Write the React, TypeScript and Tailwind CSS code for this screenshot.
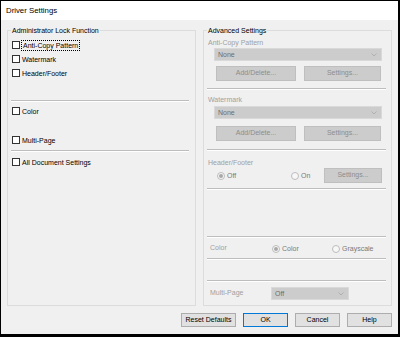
import React from 'react'

function CheckRow({ label, focused = false }: { label: string; focused?: boolean }) {
    return (
        <div className="h-[14px] flex items-center">
            <span className="w-[8px] h-[8px] border border-[#333333] bg-white shrink-0"></span>
            <span
                className={
                    focused
                        ? 'ml-px px-px leading-[9px] border border-dotted border-black'
                        : 'ml-[2px] leading-[9px]'
                }
            >
                {label}
            </span>
        </div>
    )
}

function Radio({ label, checked }: { label: string; checked: boolean }) {
    return (
        <div className="flex items-center">
            <span className="w-[8px] h-[8px] rounded-full border border-[#bcbcbc] bg-[#f7f7f7] flex items-center justify-center shrink-0">
                {checked && <span className="w-[4px] h-[4px] rounded-full bg-[#a8a8a8]"></span>}
            </span>
            <span className="ml-[2px] text-[#7a7a7a] leading-[9px]">{label}</span>
        </div>
    )
}

function Chevron() {
    return (
        <svg width="6" height="4" viewBox="0 0 6 4" className="shrink-0">
            <path d="M0.5 0.5 L3 3 L5.5 0.5" fill="none" stroke="#a8a8a8" strokeWidth="0.8" />
        </svg>
    )
}

function Dropdown({ value, className = '' }: { value: string; className?: string }) {
    return (
        <div
            className={`h-[13px] bg-[#cccccc] border border-[#d9d9d9] flex items-center justify-between pl-[3px] pr-[4px] text-[#6d6d6d] ${className}`}
        >
            <span className="leading-[9px]">{value}</span>
            <Chevron />
        </div>
    )
}

function DisabledButton({ label, className = '' }: { label: string; className?: string }) {
    return (
        <div
            className={`h-[15px] bg-[#cccccc] border border-[#bfbfbf] flex items-center justify-center text-[#8d8d8d] ${className}`}
        >
            {label}
        </div>
    )
}

function Separator({ className = '' }: { className?: string }) {
    return <div className={`h-[2px] border-t border-[#bdbdbd] border-b border-b-white ${className}`}></div>
}

function DialogButton({ label, primary = false, className = '' }: { label: string; primary?: boolean; className?: string }) {
    return (
        <div
            className={`h-[14px] bg-[#e1e1e1] border flex items-center justify-center ${
                primary ? 'border-[#0078d7]' : 'border-[#adadad]'
            } ${className}`}
        >
            {label}
        </div>
    )
}

export default function App() {
    return (
        <div className="w-[400px] h-[337px] bg-black pt-px pl-px pr-[2px] pb-[3px] flex flex-col font-['Liberation_Sans',Arial,sans-serif] text-[7px] text-black">
            {/* Title bar */}
            <div className="h-[19px] bg-white flex items-center pl-[5px] text-[7.8px]">Driver Settings</div>

            <div className="flex-1 bg-[#f0f0f0] flex flex-col px-[6px] pt-[6px] pb-[7px]">
                <div className="flex-1 flex gap-[7px]">
                    {/* Administrator Lock Function */}
                    <fieldset className="flex-1 border border-[#dcdcdc] px-[4px]">
                        <legend className="leading-[9px] px-px -ml-px">Administrator Lock Function</legend>
                        <div className="flex flex-col pt-[3px]">
                            <CheckRow label="Anti-Copy Pattern" focused />
                            <CheckRow label="Watermark" />
                            <CheckRow label="Header/Footer" />
                            <Separator className="mt-[20px] -ml-px mr-[2px]" />
                            <div className="mt-[2px]">
                                <CheckRow label="Color" />
                            </div>
                            <div className="mt-[15px]">
                                <CheckRow label="Multi-Page" />
                            </div>
                            <Separator className="mt-[3px] -ml-px mr-[2px]" />
                            <div className="mt-[3px]">
                                <CheckRow label="All Document Settings" />
                            </div>
                        </div>
                    </fieldset>

                    {/* Advanced Settings */}
                    <fieldset className="flex-1 border border-[#dcdcdc] px-[4px]">
                        <legend className="leading-[9px] px-px -ml-px">Advanced Settings</legend>
                        <div className="flex flex-col">
                            <div className="mt-[3px] h-[9px] leading-[9px] text-[#a0a0a0]">Anti-Copy Pattern</div>
                            <Dropdown value="None" className="mt-px ml-[6px] mr-[5px]" />
                            <div className="mt-[5px] flex">
                                <DisabledButton label="Add/Delete..." className="ml-[8px] w-[80px]" />
                                <DisabledButton label="Settings..." className="ml-[8px] w-[77px]" />
                            </div>
                            <Separator className="mt-[7px] -ml-px mr-px" />

                            <div className="mt-[5px] h-[9px] leading-[9px] text-[#a0a0a0]">Watermark</div>
                            <Dropdown value="None" className="mt-[2px] ml-[6px] mr-[5px]" />
                            <div className="mt-[7px] flex">
                                <DisabledButton label="Add/Delete..." className="ml-[8px] w-[80px]" />
                                <DisabledButton label="Settings..." className="ml-[8px] w-[77px]" />
                            </div>
                            <Separator className="mt-[8px] -ml-px mr-px" />

                            <div className="mt-[7px] h-[9px] leading-[9px] text-[#a0a0a0]">Header/Footer</div>
                            <div className="mt-px h-[15px] flex items-center">
                                <div className="ml-[9px] w-[74px]">
                                    <Radio label="Off" checked />
                                </div>
                                <div className="w-[33px]">
                                    <Radio label="On" checked={false} />
                                </div>
                                <DisabledButton label="Settings..." className="w-[58px]" />
                            </div>
                            <Separator className="mt-[5px] -ml-px mr-px" />

                            <Separator className="mt-[46px] -ml-px mr-px" />
                            <div className="mt-[4px] h-[13px] flex items-center">
                                <div className="ml-[2px] w-[62px] text-[#a0a0a0]">Color</div>
                                <div className="w-[60px]">
                                    <Radio label="Color" checked />
                                </div>
                                <Radio label="Grayscale" checked={false} />
                            </div>
                            <Separator className="mt-[3px] -ml-px mr-px" />

                            <Separator className="mt-[20px] -ml-px mr-px" />
                            <div className="mt-[5px] h-[13px] flex items-center">
                                <div className="ml-[2px] w-[61px] text-[#a0a0a0]">Multi-Page</div>
                                <Dropdown value="Off" className="w-[78px]" />
                            </div>
                        </div>
                    </fieldset>
                </div>

                {/* Dialog buttons */}
                <div className="mt-[7px] flex justify-end">
                    <DialogButton label="Reset Defaults" className="w-[55px]" />
                    <DialogButton label="OK" primary className="ml-[7px] w-[45px]" />
                    <DialogButton label="Cancel" className="ml-[7px] w-[45px]" />
                    <DialogButton label="Help" className="ml-[7px] w-[45px]" />
                </div>
            </div>
        </div>
    )
}
